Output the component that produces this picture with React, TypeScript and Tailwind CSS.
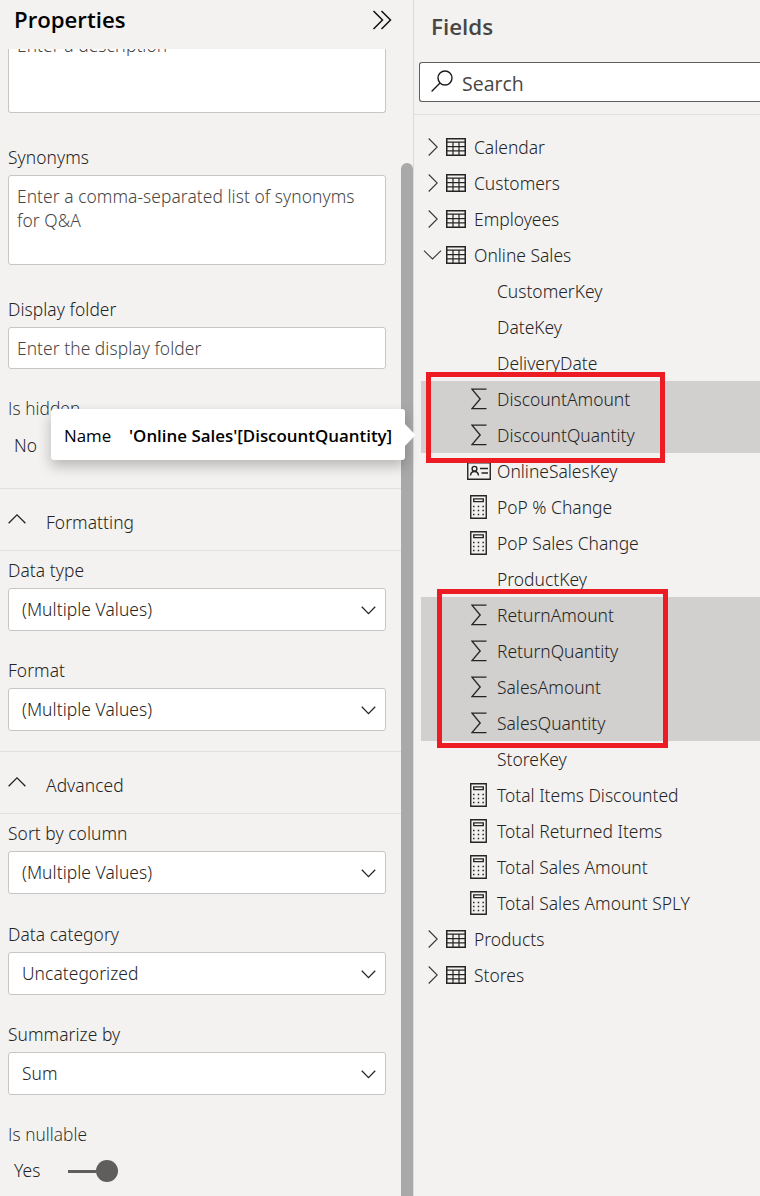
import { ReactNode } from "react";

const ink = "#252423";

function TableIcon() {
  return (
    <svg width="20" height="18" viewBox="0 0 20 18" fill="none" stroke={ink}>
      <path strokeWidth="1.5" d="M0.75 0.75H19.25V17.25H0.75Z" />
      <path strokeWidth="1.2" d="M0.75 4.2H19.25M0.75 8.6H19.25M0.75 12.9H19.25M7 4.2V17M13 4.2V17" />
    </svg>
  );
}

function SigmaIcon() {
  return (
    <svg width="16" height="22" viewBox="0 0 16 22" fill="none" stroke={ink} strokeWidth="1.3">
      <path d="M15.5 1.2H1L9.2 11L1 20.6H15.5" />
    </svg>
  );
}

function CalculatorIcon() {
  return (
    <svg width="17" height="24" viewBox="0 0 17 24" fill="none" stroke={ink} strokeWidth="1.4">
      <path d="M0.75 0.75H16.25V23.25H0.75ZM3.75 3.9H13.25V6.6H3.75Z" />
      <path d="M3 11.5H14M3 15.5H14M3 19.5H14" strokeWidth="1.4" strokeDasharray="1.5 3.2" />
    </svg>
  );
}

function KeyCardIcon() {
  return (
    <svg width="24" height="18" viewBox="0 0 24 18" fill="none" stroke={ink} strokeWidth="1.4">
      <path d="M0.75 0.75H23.25V17.25H0.75ZM13 6.5H21M14.5 11H21" />
      <circle cx="7.5" cy="6.8" r="2.4" />
      <path d="M3.5 13.5C4 8.2 11 8.2 11.5 13.5" />
    </svg>
  );
}

function Field({ name, kind }: { name: string; kind?: "sum" | "calc" | "key" }) {
  return (
    <li className={`ml-[7px] flex h-9 items-center pl-[43px] ${kind === "sum" ? "bg-[#d1d0ce]" : ""}`}>
      <span className="flex w-[33px] shrink-0 items-center">
        {kind === "sum" && <span className="ml-[7px]"><SigmaIcon /></span>}
        {kind === "calc" && <span className="ml-[6px]"><CalculatorIcon /></span>}
        {kind === "key" && <span className="ml-[3px]"><KeyCardIcon /></span>}
      </span>
      <span>{name}</span>
    </li>
  );
}

function TableRow({ name, open }: { name: string; open?: boolean }) {
  return (
    <li className="flex h-9 items-center pl-[9px]">
      <span className="flex w-[23px] items-center">
        {open ? (
          <svg width="19" height="10" viewBox="0 0 19 10" fill="none" stroke="#3b3a39" strokeWidth="1.1">
            <path d="M1 0.7L9.5 9L18 0.7" />
          </svg>
        ) : (
          <svg className="ml-[5px]" width="10" height="18" viewBox="0 0 10 18" fill="none" stroke="#3b3a39" strokeWidth="1.1">
            <path d="M0.7 0.5L9.2 9L0.7 17.5" />
          </svg>
        )}
      </span>
      <TableIcon />
      <span className="ml-[8px]">{name}</span>
    </li>
  );
}

function Label({ children }: { children: ReactNode }) {
  return <div className="mb-[5px] h-6 leading-[22px]">{children}</div>;
}

function Select({ label, value, className }: { label: string; value: string; className: string }) {
  return (
    <div className={`mx-2 w-[378px] ${className}`}>
      <Label>{label}</Label>
      <div className="flex h-[43px] items-center justify-between rounded-[3px] border border-[#c8c6c4] bg-white pl-[13px] pr-[9px]">
        <span>{value}</span>
        <svg className="mt-[2px]" width="15" height="9" viewBox="0 0 15 9" fill="none" stroke={ink} strokeWidth="1.3">
          <path d="M0.8 0.8L7.5 7.6L14.2 0.8" />
        </svg>
      </div>
    </div>
  );
}

function Section({ title, className }: { title: string; className: string }) {
  return (
    <div className={`flex h-[63px] w-[401px] items-center border-y border-[#e1dfdd] pl-2 ${className}`}>
      <svg className="-mt-[2px]" width="18" height="10" viewBox="0 0 18 10" fill="none" stroke={ink} strokeWidth="1.3">
        <path d="M0.6 9.2L9 0.9L17.4 9.2" />
      </svg>
      <span className="ml-5 mt-[5px]">{title}</span>
    </div>
  );
}

function Properties() {
  return (
    <section className="flex h-full w-[414px] shrink-0 flex-col border-r border-[#dddbd9]">
      <header className="flex h-[49px] shrink-0 items-center justify-between pb-[9px] pl-[14px] pr-[21px]">
        <h2 className="mt-px text-[22.2px] font-semibold leading-none text-black">Properties</h2>
        <svg width="20" height="20" viewBox="0 0 20 20" fill="none" stroke="#111" strokeWidth="1.5">
          <path d="M1.5 1L10.5 10L1.5 19M9.5 1L18.5 10L9.5 19" />
        </svg>
      </header>
      <div className="flex min-h-0 flex-1">
        <div className="w-[401px] overflow-hidden font-['Noto_Sans','Open_Sans',sans-serif] text-[17.4px] font-light tracking-[0.06px]">
          <div className="mx-2 flow-root h-16 w-[378px] rounded-b-[3px] border border-t-0 border-[#c8c6c4] bg-white px-2 text-[#484644]">
            <div className="-mt-[16px] leading-6">Enter a description</div>
          </div>
          <div className="mx-2 mt-[33px] w-[378px]">
            <Label>Synonyms</Label>
            <div className="h-[90px] rounded-[3px] border border-[#c8c6c4] bg-white px-2 pt-[8px] leading-6 text-[#484644]">
              Enter a comma-separated list of synonyms for Q&amp;A
            </div>
          </div>
          <div className="mx-2 mt-[33px] w-[378px]">
            <Label>Display folder</Label>
            <div className="flex h-[42px] items-center rounded-[3px] border border-[#c8c6c4] bg-white px-2 text-[#484644]">
              Enter the display folder
            </div>
          </div>
          <div className="mt-[27px] pl-2 font-['Open_Sans'] leading-6">Is hidden</div>
          <div className="mt-[13px] pl-[14px] leading-6">No</div>
          <Section title="Formatting" className="mt-[31px]" />
          <Select label="Data type" value="(Multiple Values)" className="mt-[8px]" />
          <Select label="Format" value="(Multiple Values)" className="mt-[28px]" />
          <Section title="Advanced" className="mt-[20px]" />
          <Select label="Sort by column" value="(Multiple Values)" className="mt-[8px]" />
          <Select label="Data category" value="Uncategorized" className="mt-[29px]" />
          <Select label="Summarize by" value="Sum" className="mt-[28px]" />
          <div className="mt-[27px] pl-2 font-['Open_Sans'] leading-6">Is nullable</div>
          <div className="mt-[14px] flex items-center pl-[14px] leading-6">
            <span className="-mt-[2px] w-[54px]">Yes</span>
            <span className="h-[3px] w-[28px] bg-[#605e5c]" />
            <span className="h-[22px] w-[22px] rounded-full bg-[#605e5c]" />
          </div>
        </div>
        <div className="mt-[114px] w-3 rounded-t-full bg-[#a9a9a9]" />
      </div>
    </section>
  );
}

function Fields() {
  return (
    <section className="min-w-0 flex-1">
      <div className="h-[115px] border-b border-[#e1dfdd] pt-[13px]">
        <h2 className="pl-[17px] text-[22.4px] font-semibold leading-7 text-[#484644]">Fields</h2>
        <div className="ml-[5px] mt-[21px] flex h-10 items-center rounded-l-[3px] border border-r-0 border-[#605e5c] bg-white pl-[11px]">
          <svg className="-mt-[2px]" width="22" height="22" viewBox="0 0 22 22" fill="none" stroke="#1b1a19" strokeWidth="1.4">
            <circle cx="14" cy="8" r="7" />
            <path d="M9 13L0.6 21.4" />
          </svg>
          <span className="ml-[9px] mt-[3px] text-[19.5px] text-[#484644]">Search</span>
        </div>
      </div>
      <ul className="whitespace-nowrap pt-[14px] font-['Noto_Sans','Open_Sans',sans-serif] text-[17.45px] font-light">
        <TableRow name="Calendar" />
        <TableRow name="Customers" />
        <TableRow name="Employees" />
        <TableRow name="Online Sales" open />
        <Field name="CustomerKey" />
        <Field name="DateKey" />
        <Field name="DeliveryDate" />
        <Field name="DiscountAmount" kind="sum" />
        <Field name="DiscountQuantity" kind="sum" />
        <Field name="OnlineSalesKey" kind="key" />
        <Field name="PoP % Change" kind="calc" />
        <Field name="PoP Sales Change" kind="calc" />
        <Field name="ProductKey" />
        <Field name="ReturnAmount" kind="sum" />
        <Field name="ReturnQuantity" kind="sum" />
        <Field name="SalesAmount" kind="sum" />
        <Field name="SalesQuantity" kind="sum" />
        <Field name="StoreKey" />
        <Field name="Total Items Discounted" kind="calc" />
        <Field name="Total Returned Items" kind="calc" />
        <Field name="Total Sales Amount" kind="calc" />
        <Field name="Total Sales Amount SPLY" kind="calc" />
        <TableRow name="Products" />
        <TableRow name="Stores" />
      </ul>
    </section>
  );
}

export default function App() {
  return (
    <main className="relative flex h-[1196px] w-[760px] overflow-hidden bg-[#f3f2f1] font-['Open_Sans','Noto_Sans',sans-serif] text-[#252423]">
      <Properties />
      <Fields />
      <div className="absolute left-[51px] top-[409px] flex h-[51px] w-[354px] items-center whitespace-nowrap rounded-[3px] bg-white pl-[13px] pt-[2px] text-[16.9px] text-black shadow-[0_6px_14px_rgba(0,0,0,0.25)]">
        <span className="w-[65px]">Name</span>
        <span className="font-semibold">'Online Sales'[DiscountQuantity]</span>
        <svg className="absolute left-[353px] top-[14px]" width="12" height="24" viewBox="0 0 12 24" fill="white">
          <path d="M0 0L11.5 12L0 24Z" />
        </svg>
      </div>
      <div className="absolute left-[426px] top-[372px] h-[91px] w-[239px] border-[5px] border-[#ed1c24]" />
      <div className="absolute left-[437px] top-[589px] h-[159px] w-[231px] border-[5px] border-[#ed1c24]" />
    </main>
  );
}
